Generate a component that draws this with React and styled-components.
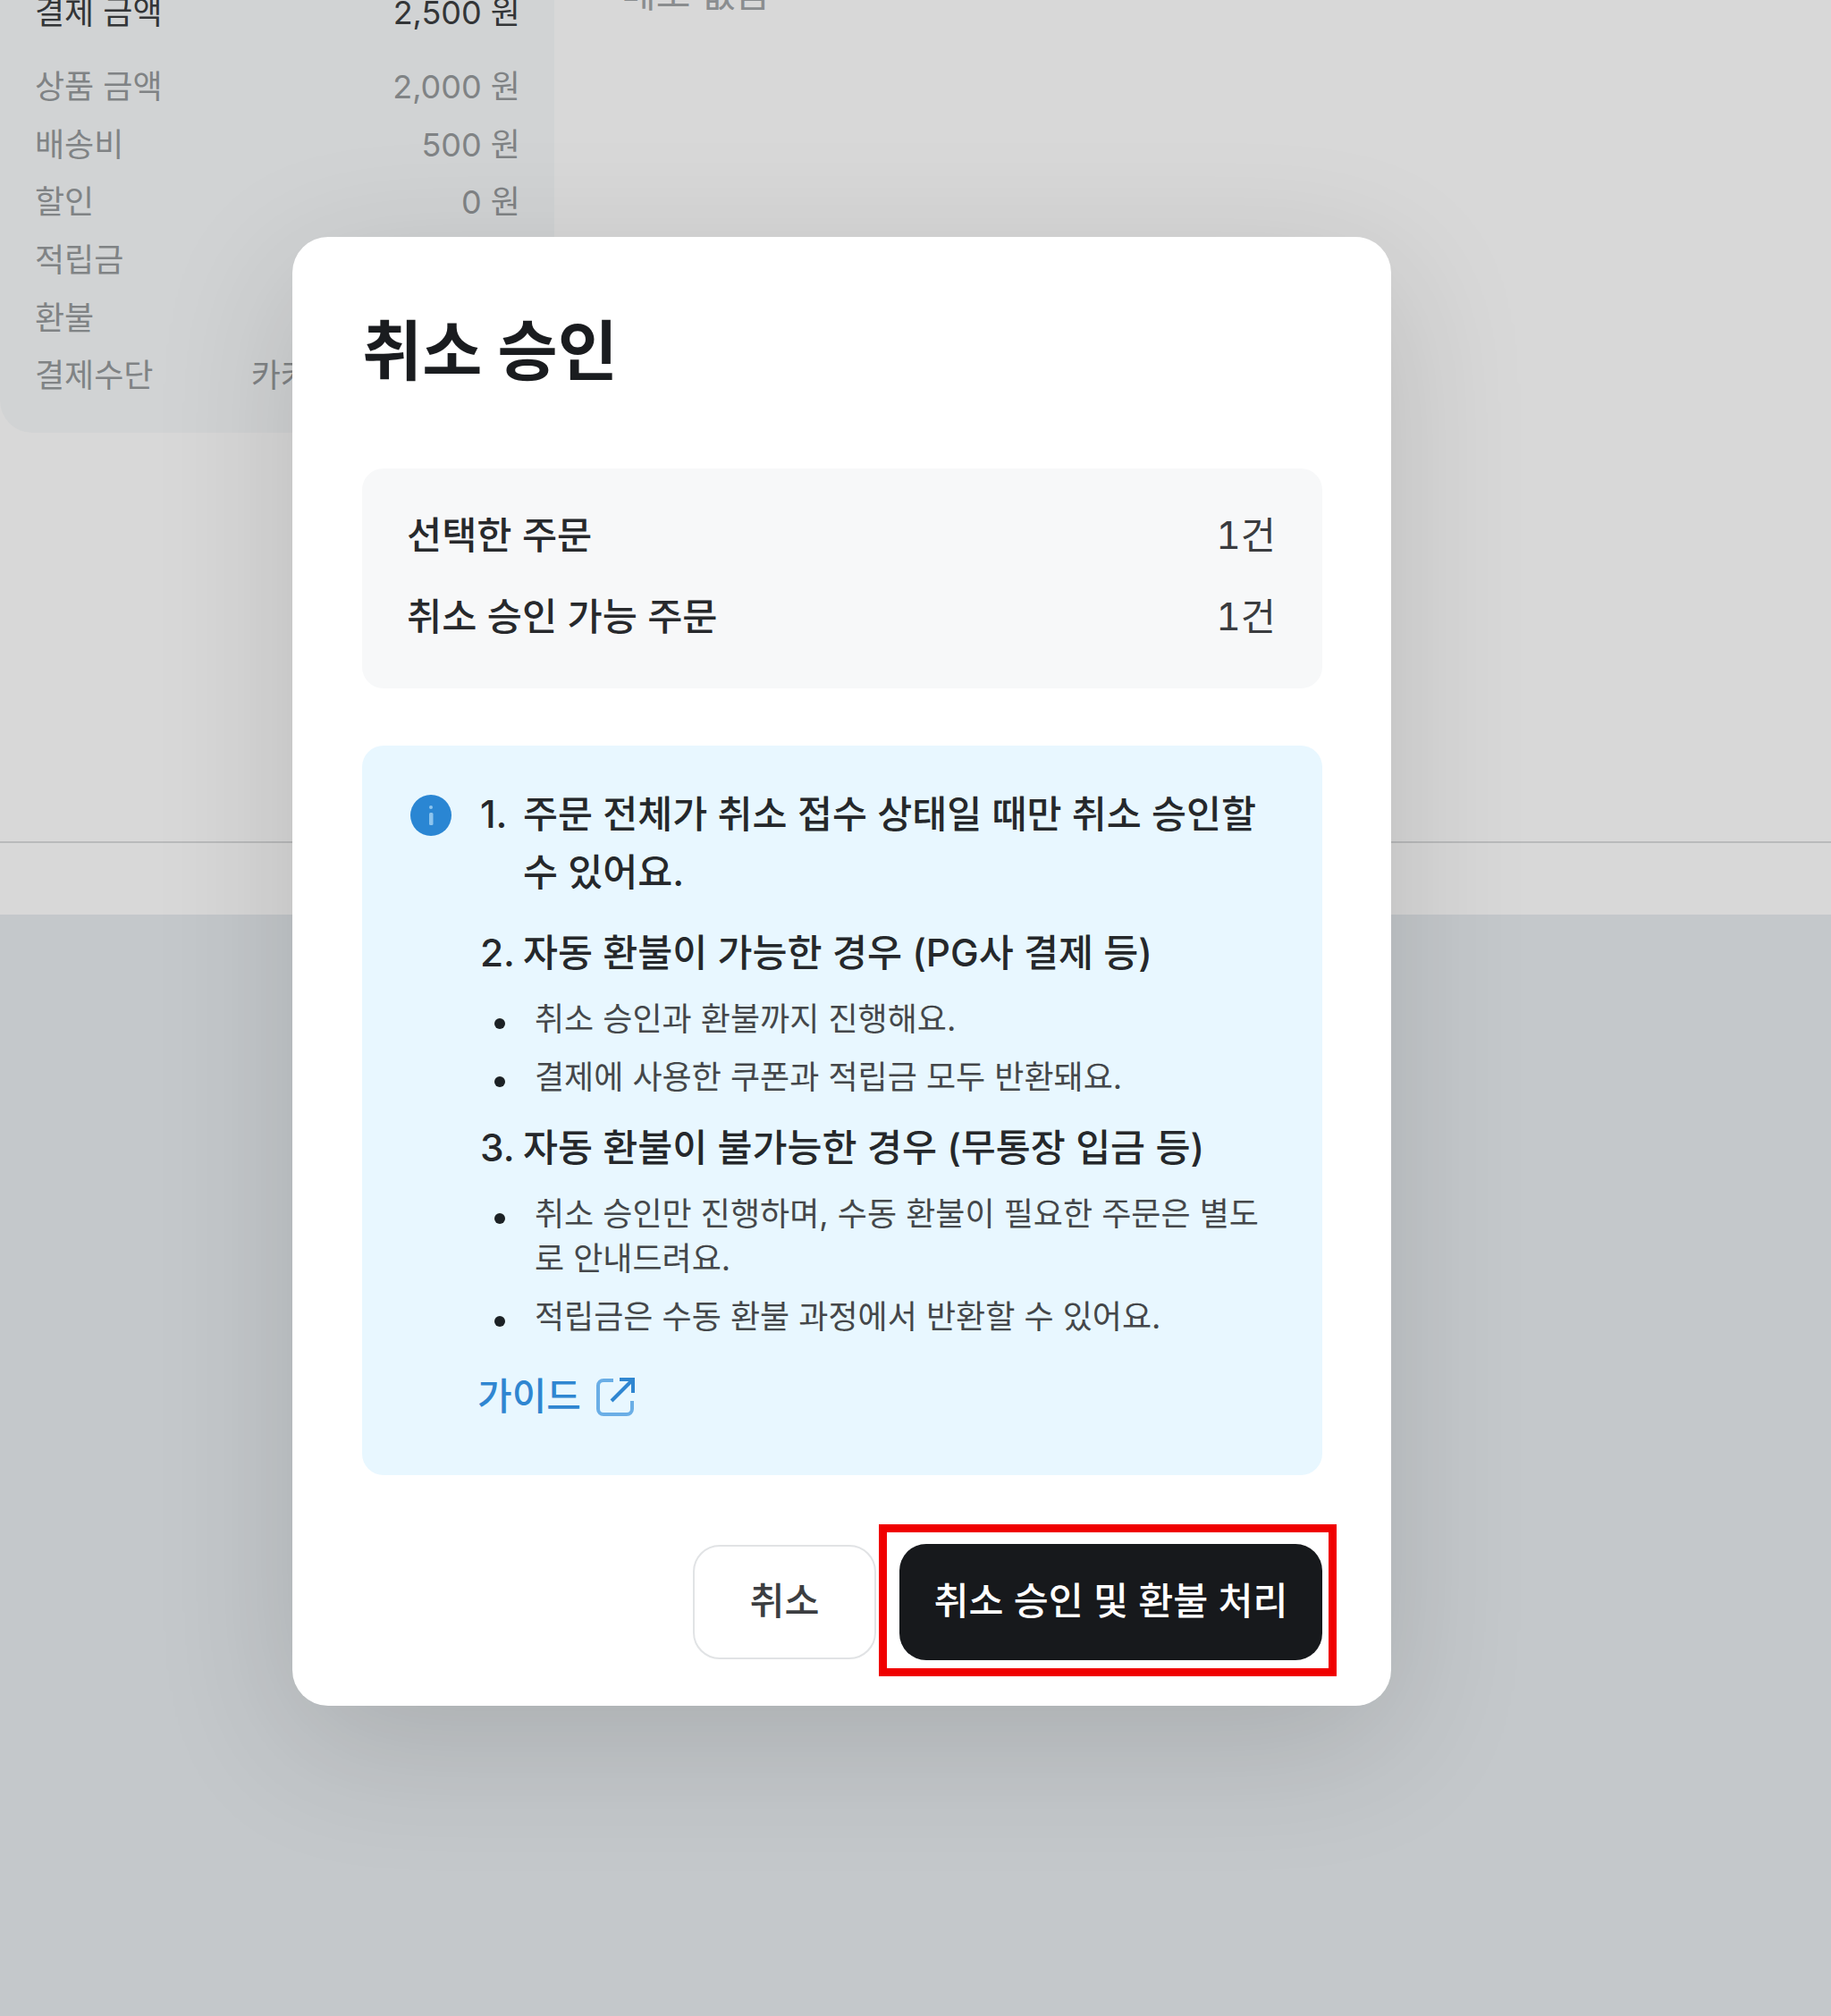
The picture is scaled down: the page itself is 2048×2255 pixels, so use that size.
import React from "react";
import styled, { createGlobalStyle } from "styled-components";

const FONT = `"Inter", "Noto Sans CJK KR", "Noto Sans", sans-serif`;

const Global = createGlobalStyle`
  html, body { margin: 0; padding: 0; }
  body { font-family: ${FONT}; color: #1a1c1f; }
`;

const Page = styled.div`
  position: relative;
  width: 2048px;
  height: 2255px;
  overflow: hidden;
  background: #c4c8cb;
`;

const TopArea = styled.section`
  height: 1023px;
  background: #d8d8d8;
  display: flex;
  flex-direction: column;
`;

const TopColumns = styled.div`
  height: 943px;
  border-bottom: 2px solid #b9babb;
  box-sizing: border-box;
  display: flex;
  gap: 75px;
`;

const PayCard = styled.div`
  width: 620px;
  height: 505px;
  margin-top: -21px;
  padding: 0 38px 0 39px;
  box-sizing: border-box;
  background: #d1d3d4;
  border-radius: 0 0 36px 36px;
  overflow: hidden;
`;

const PayRow = styled.div`
  display: flex;
  justify-content: space-between;
  height: 64.7px;
  align-items: center;
  font-size: 36px;
  color: ${(p) => (p.$strong ? "#333537" : "#808385")};
  margin-bottom: ${(p) => (p.$strong ? "18px" : "0")};
  white-space: nowrap;
`;

const Memo = styled.div`
  margin-top: -33px;
  font-size: 42px;
  line-height: 52px;
  color: #8a8d8f;
`;

const Overlay = styled.div`
  position: absolute;
  left: 327px;
  top: 265px;
`;

const Modal = styled.div`
  width: 1229px;
  height: 1643px;
  box-sizing: border-box;
  padding: 79px 77px 0 78px;
  background: #fff;
  border-radius: 40px;
  box-shadow: 0 40px 160px rgba(0, 0, 0, 0.14);
  display: flex;
  flex-direction: column;
`;

const Title = styled.h2`
  margin: 0 0 83px;
  font-size: 73px;
  line-height: 97px;
  font-weight: 700;
  color: #1a1c1f;
`;

const Summary = styled.div`
  height: 246px;
  box-sizing: border-box;
  padding: 26px 52px 0 50px;
  background: #f7f8f9;
  border-radius: 24px;
  margin-bottom: 64px;
`;

const SummaryRow = styled.div`
  display: flex;
  justify-content: space-between;
  height: 91px;
  align-items: center;
  font-size: 42.6px;
  font-weight: 500;
  color: #27292c;
`;

const SummaryValue = styled.span`
  font-weight: 400;
  font-variant-numeric: tabular-nums;
  color: #3a3c3f;
`;

const InfoBox = styled.div`
  height: 816px;
  box-sizing: border-box;
  padding: 44px 50px 0 54px;
  background: #e8f7ff;
  border-radius: 24px;
  display: flex;
  gap: 32px;
`;

const InfoIcon = styled.svg`
  flex: none;
  width: 46px;
  height: 46px;
  margin-top: 11px;
`;

const InfoBody = styled.div`
  flex: 1;
  min-width: 0;
`;

const Heading = styled.div`
  display: flex;
  font-size: 42.4px;
  line-height: 65px;
  font-weight: 500;
  color: #25282b;
  margin-bottom: ${(p) => p.$after || "0"};
`;

const HeadingNum = styled.span`
  flex: none;
  width: 48px;
`;

const Bullets = styled.ul`
  margin: 0 0 ${(p) => p.$after || "0"};
  padding: 0 0 0 61px;
  list-style: none;
`;

const Bullet = styled.li`
  position: relative;
  font-size: 36px;
  line-height: 50px;
  color: #44474a;
  margin-bottom: 15px;
  &::before {
    content: "";
    position: absolute;
    left: -45px;
    top: 24px;
    width: 12px;
    height: 12px;
    border-radius: 50%;
    background: #1c2125;
  }
`;

const Guide = styled.a`
  display: inline-flex;
  align-items: center;
  gap: 16px;
  margin-left: -3px;
  font-size: 42px;
  font-weight: 500;
  line-height: 60px;
  color: #2f86d1;
  text-decoration: none;
`;

const Actions = styled.div`
  display: flex;
  justify-content: flex-end;
  align-items: center;
  gap: 26px;
  margin-top: 77px;
`;

const CancelButton = styled.button`
  width: 205px;
  height: 128px;
  box-sizing: border-box;
  padding: 0 0 10px;
  border: 2px solid #e1e3e5;
  border-radius: 30px;
  background: #fff;
  font: 500 42.4px ${FONT};
  color: #3c3e41;
`;

const ConfirmButton = styled.button`
  position: relative;
  width: 473px;
  height: 130px;
  padding: 0 0 10px;
  border: 0;
  border-radius: 30px;
  background: #17191c;
  font: 500 42.4px ${FONT};
  color: #fff;
  &::after {
    content: "";
    position: absolute;
    inset: -22px -16px -18px -23px;
    border: 9px solid #f00000;
    pointer-events: none;
  }
`;

export default function App() {
  return (
    <Page>
      <Global />
      <TopArea>
        <TopColumns>
          <PayCard>
            <PayRow $strong><span>결제 금액</span><span>2,500 원</span></PayRow>
            <PayRow><span>상품 금액</span><span>2,000 원</span></PayRow>
            <PayRow><span>배송비</span><span>500 원</span></PayRow>
            <PayRow><span>할인</span><span>0 원</span></PayRow>
            <PayRow><span>적립금</span><span>0 원</span></PayRow>
            <PayRow><span>환불</span><span>0 원</span></PayRow>
            <PayRow><span>결제수단</span><span>카카오페이 (일시불)</span></PayRow>
          </PayCard>
          <Memo>메모 없음</Memo>
        </TopColumns>
      </TopArea>
      <Overlay>
        <Modal>
          <Title>취소 승인</Title>
          <Summary>
            <SummaryRow><span>선택한 주문</span><SummaryValue>1건</SummaryValue></SummaryRow>
            <SummaryRow><span>취소 승인 가능 주문</span><SummaryValue>1건</SummaryValue></SummaryRow>
          </Summary>
          <InfoBox>
            <InfoIcon viewBox="0 0 46 46">
              <circle cx="23" cy="23" r="23" fill="#2a86d3" />
              <circle cx="23" cy="14" r="2" fill="#8cc4ee" />
              <rect x="21" y="20" width="4.5" height="14" rx="1.5" fill="#8cc4ee" />
            </InfoIcon>
            <InfoBody>
              <Heading $after="25px">
                <HeadingNum>1.</HeadingNum>
                <span>주문 전체가 취소 접수 상태일 때만 취소 승인할 수 있어요.</span>
              </Heading>
              <Heading $after="17px"><HeadingNum>2.</HeadingNum><span>자동 환불이 가능한 경우 (PG사 결제 등)</span></Heading>
              <Bullets $after="21px">
                <Bullet>취소 승인과 환불까지 진행해요.</Bullet>
                <Bullet>결제에 사용한 쿠폰과 적립금 모두 반환돼요.</Bullet>
              </Bullets>
              <Heading $after="17px"><HeadingNum>3.</HeadingNum><span>자동 환불이 불가능한 경우 (무통장 입금 등)</span></Heading>
              <Bullets $after="34px">
                <Bullet>취소 승인만 진행하며, 수동 환불이 필요한 주문은 별도로 안내드려요.</Bullet>
                <Bullet>적립금은 수동 환불 과정에서 반환할 수 있어요.</Bullet>
              </Bullets>
              <Guide href="#">
                가이드
                <svg width="46" height="46" viewBox="0 0 46 46" fill="none" stroke="#6aaee6" strokeWidth="4">
                  <path d="M20 5H9a6 6 0 0 0-6 6v26a6 6 0 0 0 6 6h26a6 6 0 0 0 6-6V28" />
                  <path d="M18 28 41 5" stroke="#2f86d1" />
                  <path d="M27 4h15v15" stroke="#2f86d1" />
                </svg>
              </Guide>
            </InfoBody>
          </InfoBox>
          <Actions>
            <CancelButton>취소</CancelButton>
            <ConfirmButton>취소 승인 및 환불 처리</ConfirmButton>
          </Actions>
        </Modal>
      </Overlay>
    </Page>
  );
}
